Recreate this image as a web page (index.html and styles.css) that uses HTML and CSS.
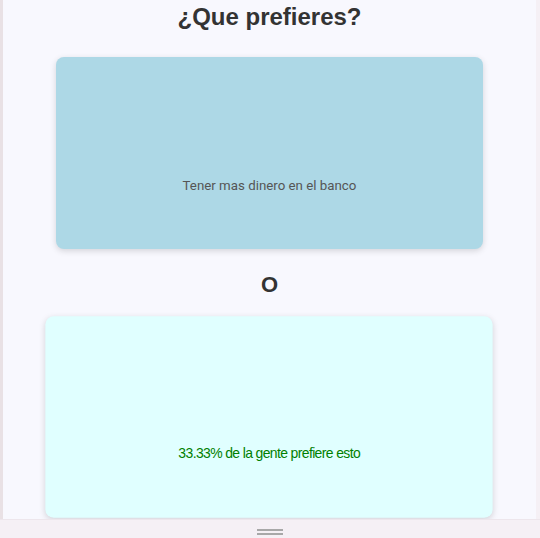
FILE: index.html
```html
<!DOCTYPE html>
<html lang="es">
<head>
<meta charset="utf-8">
<title>¿Que prefieres?</title>
<link rel="stylesheet" href="styles.css">
</head>
<body>
<div class="frame">
  <div class="edge"></div>
  <main class="content">
    <h1 class="title">¿Que prefieres?</h1>
    <div class="card card-blue">
      <p class="card-text">Tener mas dinero en el banco</p>
    </div>
    <h2 class="or">O</h2>
    <div class="card card-cyan hovered">
      <p class="card-text result">33.33% de la gente prefiere esto</p>
    </div>
  </main>
  <div class="side"></div>
</div>
<footer class="bar">
  <span class="handle"></span>
</footer>
</body>
</html>
```
FILE: styles.css
```css
html, body {
  margin: 0;
  padding: 0;
  height: 100%;
}
body {
  background: #f5f0f5;
  font-family: "Liberation Sans", Arial, sans-serif;
  overflow: hidden;
  display: flex;
  flex-direction: column;
}
.frame {
  display: flex;
  height: 519px;
}
.edge {
  width: 3px;
  background: #e9e1e5;
}
.side {
  width: 4px;
  background: #f5f0f5;
}
.content {
  flex: 1;
  background: #f8f8fe;
  display: flex;
  flex-direction: column;
  align-items: center;
  overflow: hidden;
}
.title {
  margin: 0;
  padding-top: 2px;
  font-size: 24px;
  line-height: 30px;
  font-weight: bold;
  color: #333;
}
.card {
  width: 80%;
  height: 192px;
  box-sizing: border-box;
  border-radius: 8px;
  box-shadow: 0 2px 6px rgba(0, 0, 0, 0.15);
  display: flex;
  justify-content: center;
  align-items: flex-start;
  padding-top: 121px;
  flex-shrink: 0;
}
.card-blue {
  margin-top: 25px;
  background: #add8e6;
}
.card-cyan {
  background: #e0ffff;
}
.hovered {
  transform: scale(1.05);
}
.card-text {
  margin: 0;
  font-family: Roboto, "Liberation Sans", sans-serif;
  font-size: 13.3px;
  line-height: 16px;
  color: #555;
}
.result {
  font-family: "Liberation Sans", Arial, sans-serif;
  letter-spacing: -0.6px;
  padding-top: 2px;
  color: #008000;
}
.or {
  margin: 0;
  height: 72px;
  display: flex;
  align-items: center;
  font-size: 22px;
  font-weight: bold;
  color: #333;
}
.bar {
  flex: 1;
  display: flex;
  justify-content: center;
  align-items: flex-start;
  padding-top: 9px;
  background: #f5f0f5;
  border-top: 1px solid #ede6ec;
}
.handle {
  width: 26px;
  height: 2px;
  border-top: 2px solid #a8a8a8;
  border-bottom: 2px solid #a8a8a8;
}
```
